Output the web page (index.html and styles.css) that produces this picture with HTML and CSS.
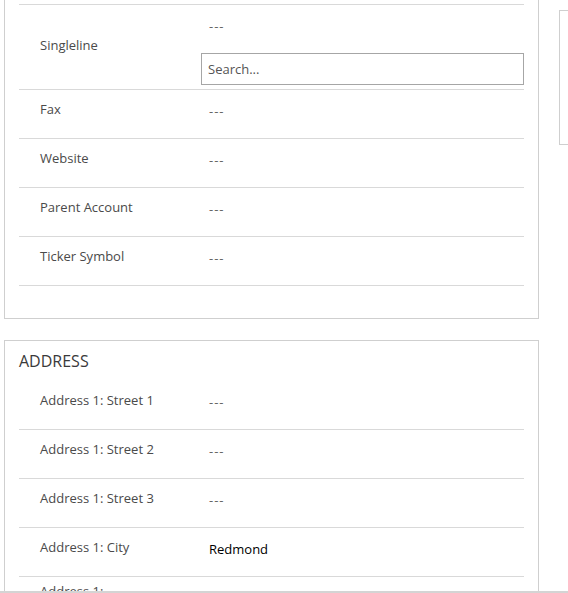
FILE: index.html
```html
<!DOCTYPE html>
<html lang="en">
<head>
<meta charset="utf-8">
<title>Account form</title>
<link rel="stylesheet" href="styles.css">
</head>
<body>
<div class="viewport">
  <div class="layout">
    <main class="main-col">
      <section class="card card--continued">
        <div class="row row--tall">
          <div class="label label--center">Singleline</div>
          <div class="value-stack">
            <div class="value">---</div>
            <input class="search" type="text" placeholder="Search...">
          </div>
        </div>
        <div class="row">
          <div class="label">Fax</div>
          <div class="value">---</div>
        </div>
        <div class="row">
          <div class="label">Website</div>
          <div class="value">---</div>
        </div>
        <div class="row">
          <div class="label">Parent Account</div>
          <div class="value">---</div>
        </div>
        <div class="row">
          <div class="label">Ticker Symbol</div>
          <div class="value">---</div>
        </div>
        <div class="card-foot"></div>
      </section>

      <section class="card card--address">
        <h2 class="card-title">ADDRESS</h2>
        <div class="row">
          <div class="label">Address 1: Street 1</div>
          <div class="value">---</div>
        </div>
        <div class="row">
          <div class="label">Address 1: Street 2</div>
          <div class="value">---</div>
        </div>
        <div class="row">
          <div class="label">Address 1: Street 3</div>
          <div class="value">---</div>
        </div>
        <div class="row">
          <div class="label">Address 1: City</div>
          <div class="value value--filled">Redmond</div>
        </div>
        <div class="row">
          <div class="label label--wrap">Address 1: ZIP/Postal Code</div>
          <div class="value"></div>
        </div>
      </section>
    </main>
    <aside class="side-col">
      <div class="side-card"></div>
    </aside>
  </div>
</div>
<div class="hscroll"></div>
</body>
</html>
```
FILE: styles.css
```css
* { box-sizing: border-box; }
html, body { margin: 0; padding: 0; }
body {
  width: 568px;
  height: 593px;
  display: flex;
  flex-direction: column;
  overflow: hidden;
  background: #fff;
  font-family: "Open Sans", "Noto Sans", sans-serif;
  color: #444;
}
.viewport {
  flex: 1;
  overflow: hidden;
}
.layout {
  display: flex;
  gap: 20px;
  padding-left: 4px;
}
.main-col {
  flex: 0 0 535px;
  display: flex;
  flex-direction: column;
  gap: 21px;
}
.card {
  border: 1px solid #cfcfcf;
  padding: 0 14px;
  background: #fff;
}
.card--continued {
  border-top: 0;
  padding-top: 4px;
}
.card--continued .row:first-child { border-top: 1px solid #d9d9d9; }
.card-foot { height: 32px; }
.card-title {
  margin: 0;
  height: 40px;
  padding-top: 9px;
  font-size: 16px;
  line-height: 22px;
  font-weight: 400;
  color: #3a3a3a;
}
.row {
  display: grid;
  grid-template-columns: 182px 1fr;
  min-height: 49px;
  border-bottom: 1px solid #d9d9d9;
}
.label {
  padding: 9px 0 0 21px;
  font-size: 13px;
  line-height: 20px;
  color: #4a4a4a;
}
.label--center { align-self: center; padding-top: 0; padding-bottom: 4px; }
.label--wrap { padding-top: 5px; padding-right: 60px; line-height: 18px; }
.value {
  padding: 12px 0 0 8px;
  font-size: 13px;
  line-height: 18px;
  letter-spacing: 1px;
  color: #666;
}
.value--filled { color: #000; letter-spacing: 0; }
.value-stack {
  display: flex;
  flex-direction: column;
}
.value-stack .value { height: 48px; }
.search {
  height: 32px;
  margin: 0 0 4px;
  width: 100%;
  border: 1px solid #a6a6a6;
  padding: 0 6px;
  font-family: inherit;
  font-size: 13px;
  color: #444;
  background: #fff;
  outline: none;
}
.search::placeholder { color: #555; }
.side-col {
  flex: 0 0 220px;
  padding-top: 10px;
}
.side-card {
  height: 135px;
  border: 1px solid #cfcfcf;
  border-right: 0;
}
.hscroll {
  flex: 0 0 2px;
  background: #d4d4d4;
}
```
